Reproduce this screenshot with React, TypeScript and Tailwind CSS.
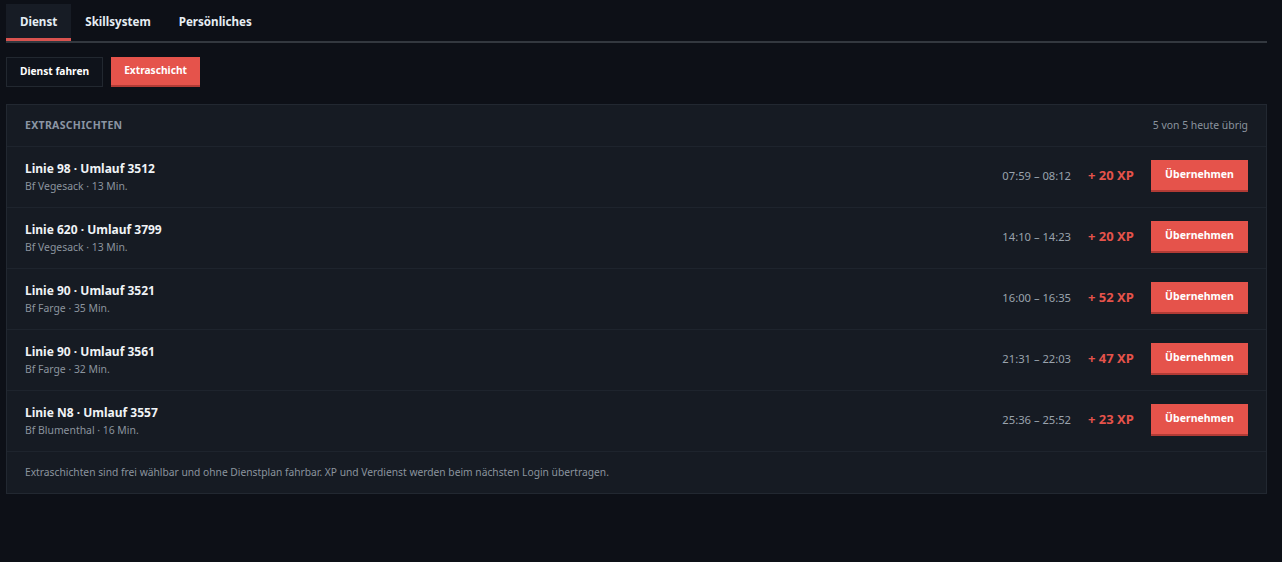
import React from "react";

type Shift = {
  line: string;
  route: string;
  depot: string;
  mins: number;
  from: string;
  to: string;
  xp: number;
};

const shifts: Shift[] = [
  { line: "98", route: "3512", depot: "Bf Vegesack", mins: 13, from: "07:59", to: "08:12", xp: 20 },
  { line: "620", route: "3799", depot: "Bf Vegesack", mins: 13, from: "14:10", to: "14:23", xp: 20 },
  { line: "90", route: "3521", depot: "Bf Farge", mins: 35, from: "16:00", to: "16:35", xp: 52 },
  { line: "90", route: "3561", depot: "Bf Farge", mins: 32, from: "21:31", to: "22:03", xp: 47 },
  { line: "N8", route: "3557", depot: "Bf Blumenthal", mins: 16, from: "25:36", to: "25:52", xp: 23 },
];

const tabs = ["Dienst", "Skillsystem", "Persönliches"];

export default function App() {
  const [tab, setTab] = React.useState("Dienst");
  const [mode, setMode] = React.useState<"fahren" | "extra">("extra");

  return (
    <div
      className="min-h-[562px] bg-[#0d1017] px-[6px] pt-[4px] text-[#e6edf3]"
      style={{ fontFamily: '"Noto Sans", "Open Sans", Arial, sans-serif' }}
    >
      <div className="mr-[9px] flex border-b-2 border-[#33383f]">
        {tabs.map((t) => (
          <button
            key={t}
            onClick={() => setTab(t)}
            className={
              t === tab
                ? "h-[37px] border-b-[3px] border-[#d9534f] bg-[#171c25] px-[14px] pt-[2px] text-[11.6px] font-bold text-[#e6edf3]"
                : "h-[37px] border-b-[3px] border-transparent px-[14px] pt-[2px] text-[11.6px] font-bold text-[#e6edf3]"
            }
          >
            {t}
          </button>
        ))}
      </div>

      <div className="mt-[14px] flex gap-[8px]">
        <button
          onClick={() => setMode("fahren")}
          className={
            mode === "fahren"
              ? "h-[30px] border-b-2 border-[#b23b35] bg-[#e5534b] px-[13px] text-[10.2px] font-bold text-white"
              : "h-[30px] border border-[#222830] bg-[#0f131b] px-[13px] text-[10.2px] font-bold text-white"
          }
        >
          Dienst fahren
        </button>
        <button
          onClick={() => setMode("extra")}
          className={
            mode === "extra"
              ? "h-[30px] border-b-2 border-[#b23b35] bg-[#e5534b] px-[13px] text-[10.2px] font-bold text-white"
              : "h-[30px] border border-[#222830] bg-[#0f131b] px-[13px] text-[10.2px] font-bold text-white"
          }
        >
          Extraschicht
        </button>
      </div>

      <div className="mr-[9px] mt-[17px] border border-[#222831] bg-[#161b23]">
        <div className="flex h-[42px] items-center justify-between border-b border-[#1e242d] px-[18px]">
          <div className="text-[10.5px] font-bold uppercase tracking-[0.03em] text-[#8b95a3]">Extraschichten</div>
          <div className="text-[10.4px] text-[#8b949e]">5 von 5 heute übrig</div>
        </div>

        {shifts.map((s) => (
          <div
            key={s.route}
            className="flex h-[61px] items-center justify-between border-b border-[#1e242d] px-[18px]"
          >
            <div>
              <div className="text-[12px] font-bold leading-[16px] text-[#f0f3f6]">
                Linie {s.line} · Umlauf {s.route}
              </div>
              <div className="mt-[2px] text-[10.4px] leading-[14px] text-[#8b949e]">
                {s.depot} · {s.mins} Min.
              </div>
            </div>
            <div className="-mt-[2px] flex items-center">
              <div className="text-[11.2px] text-[#9aa3ad]">
                {s.from} – {s.to}
              </div>
              <div className="ml-[17px] w-[48px] text-[13px] font-bold text-[#e5534b]">+ {s.xp} XP</div>
              <button className="ml-[15px] h-[32px] w-[97px] border-b-2 border-[#b23b35] bg-[#e5534b] text-[10.5px] font-bold text-white">
                Übernehmen
              </button>
            </div>
          </div>
        ))}

        <div className="flex h-[41px] items-center px-[18px] text-[10.25px] text-[#8b949e]">
          Extraschichten sind frei wählbar und ohne Dienstplan fahrbar. XP und Verdienst werden beim nächsten Login übertragen.
        </div>
      </div>
    </div>
  );
}
